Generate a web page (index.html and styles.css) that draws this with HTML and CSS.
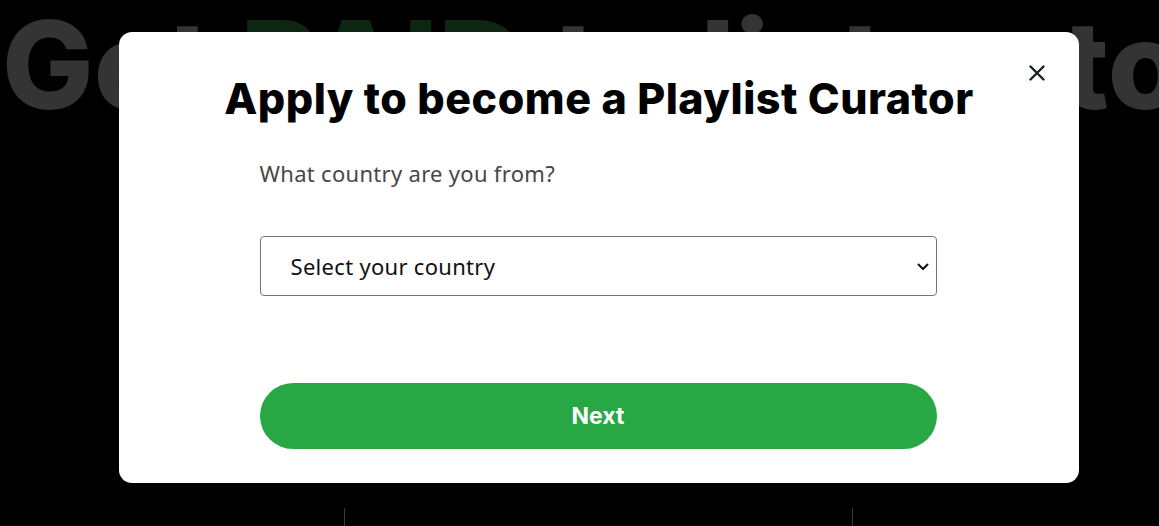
FILE: index.html
```html
<!DOCTYPE html>
<html lang="en">
<head>
<meta charset="utf-8">
<title>Apply to become a Playlist Curator</title>
<link rel="stylesheet" href="styles.css">
</head>
<body>
<div class="page">
  <h1 class="hero">Get <span class="hero-accent">PAID</span> to listen to</h1>
  <div class="hero-card"></div>
</div>

<div class="overlay">
  <div class="modal" role="dialog" aria-labelledby="modal-title">
    <button class="close" aria-label="Close">
      <svg width="16" height="16" viewBox="0 0 16 16"><path d="M1.5 1.5 L14.5 14.5 M14.5 1.5 L1.5 14.5" stroke="#14231a" stroke-width="2.4" stroke-linecap="round" fill="none"/></svg>
    </button>
    <h2 class="title" id="modal-title">Apply to become a Playlist Curator</h2>
    <div class="form">
      <label class="question" for="country">What country are you from?</label>
      <div class="select-wrap">
        <select id="country" class="select">
          <option>Select your country</option>
        </select>
        <svg class="chevron" width="12" height="8" viewBox="0 0 12 8"><path d="M1.5 1.5 L6 6 L10.5 1.5" stroke="#111" stroke-width="2" fill="none" stroke-linecap="round" stroke-linejoin="round"/></svg>
      </div>
      <button class="next">Next</button>
    </div>
  </div>
</div>
</body>
</html>
```

FILE: styles.css
```css
html, body {
  margin: 0;
  padding: 0;
  background: #000;
  height: 100%;
  overflow: hidden;
}

.page {
  display: flex;
  flex-direction: column;
}

.hero {
  margin: 0;
  padding: 0 0 0 2px;
  white-space: nowrap;
  font-family: Inter, "Liberation Sans", sans-serif;
  font-weight: 800;
  font-size: 122px;
  line-height: 130px;
  letter-spacing: 0;
  color: #343434;
}

.hero-accent {
  color: #0d2612;
}

.hero-card {
  margin: 378px 0 0 344px;
  width: 507px;
  height: 40px;
  border-left: 1px solid #3a3a3a;
  border-right: 1px solid #3a3a3a;
}

.overlay {
  position: fixed;
  inset: 0;
}

.modal {
  position: absolute;
  left: 119px;
  top: 32px;
  width: 960px;
  height: 451px;
  box-sizing: border-box;
  background: #fff;
  border-radius: 13px;
  display: flex;
  flex-direction: column;
  align-items: center;
  padding-top: 45px;
}

.close {
  position: absolute;
  top: 33px;
  left: 910px;
  width: 16px;
  height: 16px;
  padding: 0;
  border: 0;
  background: none;
  cursor: pointer;
  display: flex;
}

.title {
  margin: 0;
  font-family: Inter, "Liberation Sans", sans-serif;
  font-weight: 800;
  font-size: 43px;
  line-height: 43px;
  letter-spacing: 0.5px;
  color: #000;
}

.form {
  width: 677px;
  display: flex;
  flex-direction: column;
  margin-left: -2px;
}

.question {
  margin-top: 38px;
  font-family: "Noto Sans", "Open Sans", sans-serif;
  font-size: 22px;
  line-height: 30px;
  letter-spacing: 0.3px;
  color: #474747;
}

.select-wrap {
  position: relative;
  margin-top: 48px;
}

.select {
  width: 100%;
  height: 60px;
  box-sizing: border-box;
  appearance: none;
  -webkit-appearance: none;
  background: #fff;
  border: 1px solid #767676;
  border-radius: 4px;
  padding: 0 0 0 30px;
  font-family: "Noto Sans", "Open Sans", sans-serif;
  font-size: 22px;
  letter-spacing: 0.3px;
  color: #111;
}

.chevron {
  position: absolute;
  right: 8px;
  top: 27px;
  pointer-events: none;
}

.next {
  margin-top: 87px;
  height: 66px;
  border: 0;
  border-radius: 33px;
  background: #28a745;
  color: #fff;
  font-family: Inter, "Liberation Sans", sans-serif;
  font-weight: 700;
  font-size: 23px;
  cursor: pointer;
}
```
